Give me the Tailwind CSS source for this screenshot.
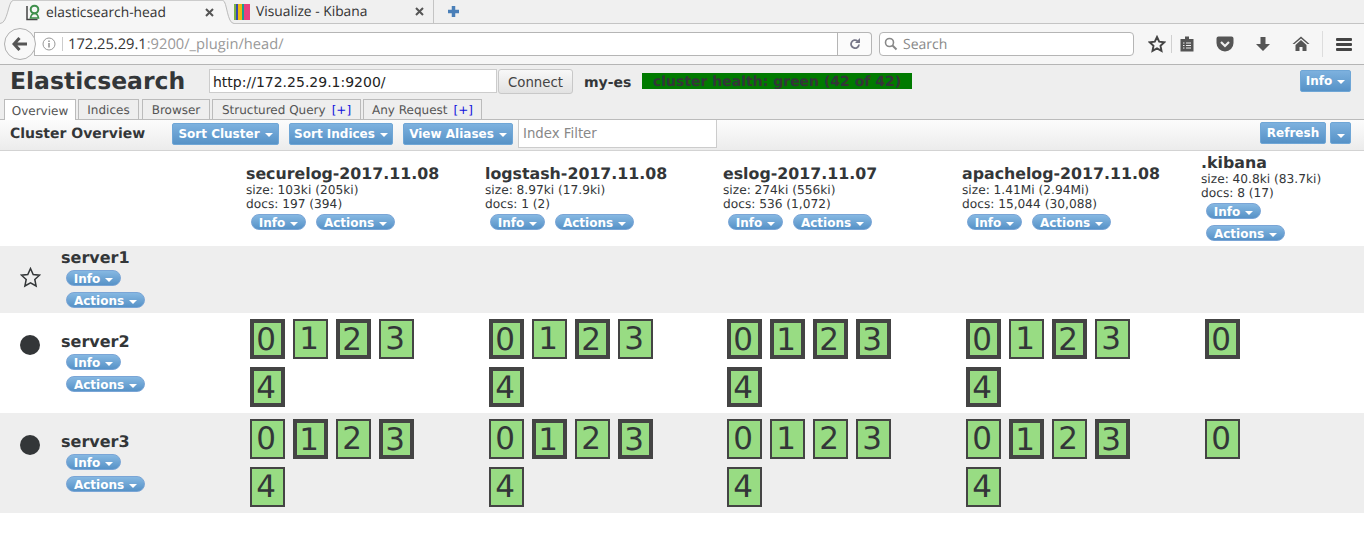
<!DOCTYPE html>
<html lang="en">
<head>
  <meta charset="UTF-8">
  <title>elasticsearch-head</title>
  <script src="https://cdn.jsdelivr.net/npm/@tailwindcss/browser@4"></script>
</head>
<body class="bg-white text-[#333638] font-['DejaVu_Sans',sans-serif] [text-rendering:geometricPrecision] overflow-hidden w-[1364px] h-[539px]">

  <!-- browser tabs -->
  <div class="h-6 bg-[#f0f0f0] flex items-stretch font-['Open_Sans',sans-serif] text-[13.800px] text-[#333]">
    <svg width="13" height="24" viewBox="0 0 13 24" class="shrink-0"><path d="M0 24V23.500C8 23.500 8 1 13 .5V24z" fill="#f6f6f6"/><path d="M0 23.500C8 23.500 8 1 13 .5" fill="none" stroke="#bbb"/></svg>
    <div class="w-[210px] bg-[#f6f6f6] border-t border-[#ccc] flex items-center pl-[12px] pr-[9px] shrink-0">
      <svg width="16" height="17" viewBox="0 0 16 17" fill="none" class="mr-[5px]"><path d="M2 2v13.500h10.500" stroke="#444" stroke-width="1.500"/><circle cx="9.500" cy="5.500" r="3.800" stroke="#3f8f4c" stroke-width="2"/><path d="M5.500 14c.5-3 2-4.500 4-4.500s3.500 1.500 4 4.500z" stroke="#3f8f4c" stroke-width="1.600"/></svg>
      <span class="flex-1 pt-px">elasticsearch-head</span>
      <svg width="9" height="9" viewBox="0 0 9 9"><path d="M1 1l7 7M8 1l-7 7" stroke="#555" stroke-width="2"/></svg>
    </div>
    <svg width="11" height="24" viewBox="0 0 11 24" class="shrink-0"><path d="M0 .5C4 1 4 23.500 11 23.500V24H0z" fill="#f6f6f6"/><path d="M0 .5C4 1 4 23.500 11 23.500" fill="none" stroke="#bbb"/></svg>
    <div class="w-[200px] border-b border-r border-[#c4c4c4] flex items-center pr-[9px] shrink-0">
      <svg width="16" height="16" viewBox="0 0 16 16" class="mr-[6px]"><rect width="2" height="16" fill="#7cb342"/><rect x="2" width="2" height="16" fill="#3949ab"/><rect x="4" width="4" height="16" fill="#f2b90d"/><rect x="8" width="2" height="16" fill="#1a9e8f"/><rect x="10" width="6" height="16" fill="#e8417f"/></svg>
      <span class="flex-1 pt-px">Visualize - Kibana</span>
      <svg width="9" height="9" viewBox="0 0 9 9"><path d="M1 1l7 7M8 1l-7 7" stroke="#555" stroke-width="2"/></svg>
    </div>
    <div class="w-[38px] border-b border-[#c4c4c4] flex items-center justify-center shrink-0">
      <svg width="13" height="13" viewBox="0 0 13 13"><path d="M6.500 1v11M1 6.500h11" stroke="#4a7fb8" stroke-width="3.500"/></svg>
    </div>
    <div class="flex-1 border-b border-[#c4c4c4]"></div>
  </div>

  <!-- browser toolbar -->
  <div class="h-[41px] bg-[#f6f6f6] border-b border-[#b5b5b5] flex items-center pl-[4px] font-['Open_Sans',sans-serif] text-[14px]">
    <div class="w-[32px] h-[32px] rounded-full border border-[#b0b0b0] bg-[#f8f8f8] flex items-center justify-center z-10 shrink-0">
      <svg width="16" height="14" viewBox="0 0 16 14"><path d="M7.500 1L2 7l5.500 6M2.500 7H15" fill="none" stroke="#555" stroke-width="3"/></svg>
    </div>
    <div class="w-[804px] h-6 -ml-[2px] bg-white border border-[#b5b5b5] flex items-center shrink-0">
      <svg width="14" height="14" viewBox="0 0 14 14" class="ml-[7px]"><circle cx="7" cy="7" r="6" fill="none" stroke="#999"/><path d="M7 6v4.500M7 3.500v1.500" stroke="#888" stroke-width="1.400"/></svg>
      <div class="w-px h-[14px] bg-[#ccc] ml-[6px] mr-[5px]"></div>
      <span class="text-[#333] text-[14.700px] pt-px">172.25.29.1<span class="text-[#999]">:9200/_plugin/head/</span></span>
    </div>
    <div class="w-[34px] h-6 bg-[#fbfbfb] border border-l-0 border-[#b5b5b5] rounded-r-sm flex items-center justify-center shrink-0">
      <svg width="12" height="12" viewBox="0 0 12 12"><path d="M10 6.500a4 4 0 1 1-1.500-3.500" fill="none" stroke="#778" stroke-width="1.800"/><path d="M11 0v5H6z" fill="#778"/></svg>
    </div>
    <div class="w-[255px] h-6 ml-[7px] bg-white border border-[#b5b5b5] rounded-sm flex items-center shrink-0">
      <svg width="14" height="14" viewBox="0 0 14 14" class="ml-[4px] mr-[5px]"><circle cx="5.500" cy="5.500" r="4" fill="none" stroke="#888" stroke-width="1.600"/><path d="M8.500 8.500l4 4" stroke="#888" stroke-width="2"/></svg>
      <span class="text-[#888] pt-px">Search</span>
    </div>
    <svg width="18" height="18" viewBox="0 0 18 18" class="ml-[14px]"><path d="M9 2l2.200 4.700 5 .6-3.700 3.500 1 5L9 13.300 4.500 15.800l1-5L1.800 7.300l5-.6z" fill="none" stroke="#444" stroke-width="1.900"/></svg>
    <div class="w-px h-[18px] bg-[#d0d0d0] ml-[5px]"></div>
    <svg width="16" height="16" viewBox="0 0 16 16" class="ml-[7px]"><path d="M1.500 3h13v12.500h-13z" fill="#555"/><path d="M6 .5h4v3H6z" fill="#555"/><path d="M4 7h1.500M7 7h5M4 9.500h1.500M7 9.500h5M4 12h1.500M7 12h5" stroke="#eee" stroke-width="1.200"/></svg>
    <svg width="18" height="16" viewBox="0 0 18 16" class="ml-[21px]"><path d="M2.500 .5h13A2 2 0 0 1 17.500 2.500V7a8.500 8.500 0 0 1-17 0V2.500A2 2 0 0 1 2.500 .5z" fill="#555"/><path d="M5 6l4 4 4-4" fill="none" stroke="#eee" stroke-width="2.200"/></svg>
    <svg width="16" height="16" viewBox="0 0 16 16" class="ml-[21px]"><path d="M5.500 1h5v7H15l-7 7-7-7h4.500z" fill="#555"/></svg>
    <svg width="18" height="16" viewBox="0 0 18 16" class="ml-[21px]"><path d="M9 .5L.5 8h2L9 2.500 15.500 8h2z" fill="#555"/><path d="M9 4L3.500 9v6h4v-4h3v4h4V9z" fill="#555"/></svg>
    <div class="w-px h-[26px] bg-[#ddd] ml-[12px]"></div>
    <div class="ml-[13px] flex flex-col gap-[2px]">
      <div class="w-4 h-[3px] rounded-[1px] bg-[#444]"></div>
      <div class="w-4 h-[3px] rounded-[1px] bg-[#444]"></div>
      <div class="w-4 h-[3px] rounded-[1px] bg-[#444]"></div>
    </div>
  </div>

  <!-- header -->
  <div class="h-[55px] bg-[#eeeeee] border-b border-[#bbb] relative">
    <div class="flex items-center h-8 pl-[10px] pr-[13px]">
      <h1 class="w-[199px] text-[23.500px] font-bold leading-[30px] -mt-px">Elasticsearch</h1>
      <input value="http://172.25.29.1:9200/" class="w-[288px] h-6 px-[3px] pt-px bg-white border border-[#ccc] text-[14px] text-[#222] outline-none">
      <button class="w-[75px] h-[25px] ml-[1px] rounded-[3px] border border-[#c8c8c8] bg-linear-to-b from-[#f8f8f8] to-[#e2e2e2] text-[13.300px] text-[#444] leading-[25px]">Connect</button>
      <span class="ml-[11px] w-[58px] mt-[3px] text-sm font-bold">my-es</span>
      <span class="w-[270px] h-4 bg-[#007a00] text-sm font-bold leading-[19px] pl-[11px] whitespace-nowrap overflow-hidden">cluster health: green (42 of 42)</span>
      <button class="ml-auto w-[51px] h-[22px] rounded-[2px] border border-[#6fa6d6] bg-linear-to-b from-[#7db1de] to-[#5692c7] text-white text-xs font-bold">Info<span class="inline-block w-0 h-0 ml-[5px] border-x-[4px] border-x-transparent border-t-[4px] border-t-white align-middle"></span></button>
    </div>
    <!-- tabs -->
    <div class="absolute left-[4px] bottom-[-1px] flex text-xs text-[#555]">
      <div class="w-[72px] h-[21px] pt-px bg-white border border-b-0 border-[#bbb] flex items-center justify-center">Overview</div>
      <div class="w-[61px] h-[21px] pt-px ml-[2px] bg-[#eeeeee] border border-[#bbb] flex items-center justify-center">Indices</div>
      <div class="w-[68px] h-[21px] pt-px ml-[3px] bg-[#eeeeee] border border-[#bbb] flex items-center justify-center">Browser</div>
      <div class="w-[149px] h-[21px] pt-px ml-[2px] bg-[#eeeeee] border border-[#bbb] flex items-center justify-center">Structured Query<span class="ml-[6px] text-[#1111dd]">[+]</span></div>
      <div class="w-[119px] h-[21px] pt-px ml-[2px] bg-[#eeeeee] border border-[#bbb] flex items-center justify-center">Any Request<span class="ml-[6px] text-[#1111dd]">[+]</span></div>
    </div>
  </div>

  <!-- cluster toolbar -->
  <div class="h-[31px] bg-linear-to-b from-[#fcfcfc] to-[#ececec] border-b border-[#d3d3d3] flex items-start pt-[3px] pl-[10px] pr-[13px]">
    <h2 class="w-[162px] text-sm font-bold leading-[22px]">Cluster Overview</h2>
    <button class="w-[107px] h-[22px] rounded-[2px] border border-[#6fa6d6] bg-linear-to-b from-[#7db1de] to-[#5692c7] text-white text-xs font-bold">Sort Cluster<span class="inline-block w-0 h-0 ml-[5px] border-x-[4px] border-x-transparent border-t-[4px] border-t-white align-middle"></span></button>
    <button class="w-[104px] h-[22px] ml-[10px] rounded-[2px] border border-[#6fa6d6] bg-linear-to-b from-[#7db1de] to-[#5692c7] text-white text-xs font-bold">Sort Indices<span class="inline-block w-0 h-0 ml-[5px] border-x-[4px] border-x-transparent border-t-[4px] border-t-white align-middle"></span></button>
    <button class="w-[110px] h-[22px] ml-[10px] rounded-[2px] border border-[#6fa6d6] bg-linear-to-b from-[#7db1de] to-[#5692c7] text-white text-xs font-bold">View Aliases<span class="inline-block w-0 h-0 ml-[5px] border-x-[4px] border-x-transparent border-t-[4px] border-t-white align-middle"></span></button>
    <input placeholder="Index Filter" class="w-[199px] h-[29px] -mt-[4px] ml-[5px] px-[4px] bg-white border border-[#ccc] text-[13.300px] placeholder:text-[#888] outline-none">
    <button class="ml-auto -mt-px w-[66px] h-[22px] rounded-[2px] border border-[#6fa6d6] bg-linear-to-b from-[#7db1de] to-[#5692c7] text-white text-xs font-bold">Refresh</button>
    <button class="ml-[4px] -mt-px w-[21px] h-[22px] rounded-[2px] border border-[#6fa6d6] bg-linear-to-b from-[#7db1de] to-[#5692c7] text-white"><span class="inline-block w-0 h-0 border-x-[4px] border-x-transparent border-t-[4px] border-t-white align-middle"></span></button>
  </div>

  <div id="cluster"></div>

  <script>
  const indices = [
    { name: 'securelog-2017.11.08', size: 'size: 103ki (205ki)', docs: 'docs: 197 (394)', width: 'w-[239px]', shards: 5 },
    { name: 'logstash-2017.11.08', size: 'size: 8.97ki (17.9ki)', docs: 'docs: 1 (2)', width: 'w-[238px]', shards: 5 },
    { name: 'eslog-2017.11.07', size: 'size: 274ki (556ki)', docs: 'docs: 536 (1,072)', width: 'w-[239px]', shards: 5 },
    { name: 'apachelog-2017.11.08', size: 'size: 1.41Mi (2.94Mi)', docs: 'docs: 15,044 (30,088)', width: 'w-[239px]', shards: 5 },
    { name: '.kibana', size: 'size: 40.8ki (83.7ki)', docs: 'docs: 8 (17)', width: 'w-[163px]', shards: 1 }
  ];
  // one string per index, t = primary (thick border), n = replica (thin border)
  const servers = [
    { name: 'server2', bg: 'bg-white', shards: ['tntnt', 'tntnt', 'ttttt', 'tntnt', 't'] },
    { name: 'server3', bg: 'bg-[#eeeeee]', shards: ['ntntn', 'ntntn', 'nnnnn', 'ntntn', 'n'] }
  ];

  function pill(label, width) {
    return `<button class="${width} h-4 pt-px flex items-center justify-center rounded-full border border-[#7aa5d6] bg-linear-to-b from-[#86b8e2] to-[#5692c7] text-white text-xs leading-3 font-bold">${label}<span class="w-0 h-0 ml-[5px] mt-[2px] border-x-[4px] border-x-transparent border-t-[4px] border-t-white"></span></button>`;
  }
  const infoBtn = pill('Info', 'w-[55px]');
  const actionsBtn = pill('Actions', 'w-[79px]');

  function indexHead(ix) {
    const last = ix.shards === 1;
    return `
      <div class="${ix.width} ${last ? 'pt-[3px]' : 'pt-[14px]'} text-[12.200px] leading-[14px]">
        <h3 class="text-[15.800px] font-bold leading-[18px] whitespace-nowrap">${ix.name}</h3>
        <div class="whitespace-nowrap">${ix.size}</div>
        <div class="whitespace-nowrap">${ix.docs}</div>
        <div class="flex ${last ? 'flex-col items-start gap-[6px]' : 'gap-[10px]'} pl-[5px] pt-[3px]">${infoBtn}${actionsBtn}</div>
      </div>`;
  }

  function nodeCell(name, topClass) {
    return `
      <div class="w-[185px] ${topClass}">
        <h3 class="text-base font-bold leading-[18px]">${name}</h3>
        <div class="flex flex-col items-start gap-[6px] pl-[5px] pt-[3px]">${infoBtn}${actionsBtn}</div>
      </div>`;
  }

  function shardBox(num, flag) {
    const border = flag === 't' ? 'border-4 pt-[2px]' : 'border-2';
    return `<div class="w-[35px] h-10 bg-[#98dc83] border-[#444] ${border} pr-[3px] flex items-center justify-center text-[31px] leading-none">${num}</div>`;
  }

  const star = '<svg width="21" height="21" viewBox="0 0 21 21"><path d="M10.500 1.500l2.700 6 6.300.7-4.700 4.300 1.300 6.500-5.600-3.200-5.600 3.200 1.300-6.500L1.500 8.200l6.300-.7z" fill="none" stroke="#333638" stroke-width="1.500"/></svg>';

  document.getElementById('cluster').innerHTML = `
    <div class="h-[95px] flex"><div class="w-[246px]"></div>${indices.map(indexHead).join('')}</div>
    <div class="h-[67px] bg-[#eeeeee] flex">
      <div class="w-[61px] pl-[20px] pt-[21px]">${star}</div>
      ${nodeCell('server1', 'pt-[3px]')}
    </div>
    ${servers.map(s => `
      <div class="h-[100px] ${s.bg} flex">
        <div class="w-[61px] pl-[20px] pt-[22px]"><div class="w-5 h-5 rounded-full bg-[#333638]"></div></div>
        ${nodeCell(s.name, 'pt-[20px]')}
        ${s.shards.map((flags, i) => `
          <div class="${indices[i].width} pl-[4px] pt-[6px]">
            <div class="flex flex-wrap gap-2 w-[180px]">${[...flags].map((f, n) => shardBox(n, f)).join('')}</div>
          </div>`).join('')}
      </div>`).join('')}`;
  </script>
</body>
</html>
